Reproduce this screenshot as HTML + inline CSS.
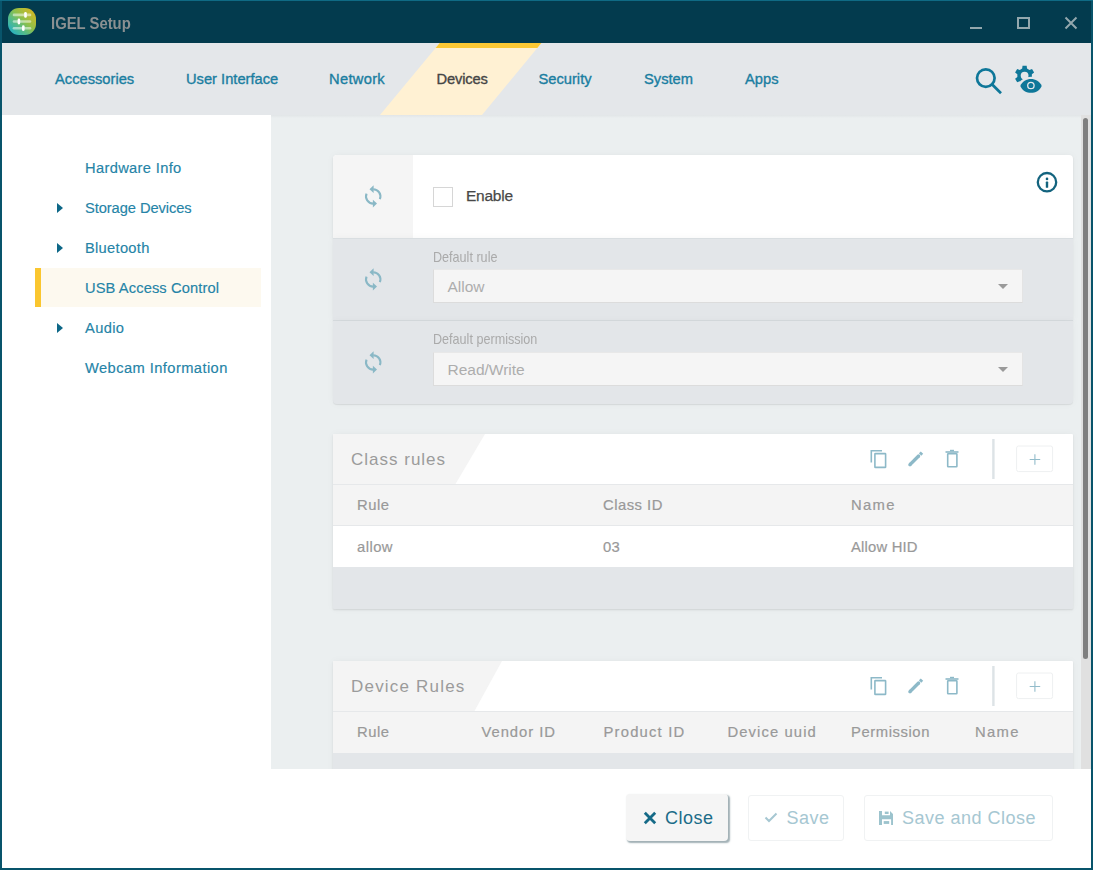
<!DOCTYPE html>
<html><head><meta charset="utf-8">
<style>
*{box-sizing:border-box;margin:0;padding:0}
html,body{width:1093px;height:870px;overflow:hidden;background:#fff;font-family:"Liberation Sans",sans-serif}
.a{position:absolute}
#win{position:absolute;left:0;top:0;width:1093px;height:870px;background:#08546b}
#title{left:2px;top:1px;width:1089px;height:42px;background:#033b4e}
#nav{left:2px;top:43px;width:1089px;height:72px;background:#e4e7ea}
#side{left:2px;top:115px;width:269px;height:654px;background:#fff}
#content{left:271px;top:115px;width:820px;height:654px;background:#ebeff0;overflow:hidden}
#footer{left:2px;top:769px;width:1089px;height:99px;background:#fff}
.tab{position:absolute;top:71px;font-size:14.7px;color:#1a7ea1;white-space:nowrap;line-height:16px;-webkit-text-stroke:0.35px #1a7ea1}
.si{position:absolute;left:85px;font-size:14.7px;color:#2584a7;white-space:nowrap;line-height:16px;-webkit-text-stroke:0.15px #2584a7}
.tri{position:absolute;left:57px;width:0;height:0;border-top:5px solid transparent;border-bottom:5px solid transparent;border-left:6px solid #0d6787}
.th{position:absolute;font-size:14.8px;color:#999;white-space:nowrap;line-height:16px;-webkit-text-stroke:0.2px #999}
.card{box-shadow:0 1px 2px rgba(0,0,0,0.10),0 0 8px rgba(0,0,0,0.035)}
.card2{box-shadow:0 1px 1px rgba(0,0,0,0.08),0 0 8px rgba(0,0,0,0.035)}
.lbl{font-size:15px;color:#aaa;white-space:nowrap;line-height:17px;transform:scaleX(0.84);transform-origin:0 0}
.sel{width:590px;height:34px;background:#f5f5f5;border:1px solid #dcdcdc;border-top-color:#e8e8e8;border-right-color:#e4e4e4}
.sel span{position:absolute;left:13.5px;top:8px;font-size:15.5px;color:#adadad;line-height:17px;white-space:nowrap}
.arrow{width:0;height:0;border-left:5px solid transparent;border-right:5px solid transparent;border-top:5px solid #9a9a9a}
.ttl{font-size:17px;letter-spacing:1px;color:#9b9b9b;white-space:nowrap;line-height:19px}
.btxt{font-size:18px;letter-spacing:0.5px;white-space:nowrap;line-height:20px}
</style></head><body>
<div id="win">
  <div class="a" style="left:0;top:0;width:1093px;height:1px;background:#0f6a84"></div>
  <div id="title" class="a">
  </div>
  <!-- app icon -->
  <div class="a" style="left:8px;top:8px;width:28px;height:27px;border-radius:11px;background:linear-gradient(45deg,#16acd8 0%,#55bb88 35%,#8cc04c 55%,#e6b418 100%)"></div>
  <svg class="a" style="left:8px;top:8px" width="28" height="27" viewBox="0 0 28 27">
    <g stroke="rgba(255,255,255,0.5)" stroke-width="2.6" stroke-linecap="round">
      <line x1="6" y1="6.9" x2="22" y2="6.9"/><line x1="6" y1="13.5" x2="22" y2="13.5"/><line x1="6" y1="20.2" x2="22" y2="20.2"/>
    </g>
    <g fill="#fff"><rect x="16.2" y="4" width="2.6" height="5.8" rx="1.3"/><rect x="9.6" y="10.6" width="2.6" height="5.8" rx="1.3"/><rect x="14" y="17.3" width="2.6" height="5.8" rx="1.3"/></g>
  </svg>
  <div class="a" style="left:51px;top:13.5px;font-weight:bold;font-size:16.5px;color:#8b9091;line-height:19px;white-space:nowrap;transform:scaleX(0.9);transform-origin:0 0">IGEL Setup</div>
  <!-- window controls -->
  <div class="a" style="left:970px;top:26.5px;width:12px;height:2px;background:#93a7ad"></div>
  <div class="a" style="left:1017px;top:16.5px;width:13px;height:12.5px;border:2px solid #93a7ad"></div>
  <svg class="a" style="left:1064px;top:16px" width="14" height="14" viewBox="0 0 14 14"><path d="M1.5 1.5L12.5 12.5M12.5 1.5L1.5 12.5" stroke="#93a7ad" stroke-width="2"/></svg>

  <div id="nav" class="a"></div>
  <svg class="a" style="left:0;top:43px" width="600" height="72" viewBox="0 0 600 72">
    <polygon points="439.7,0 541.4,0 482,72 380,72" fill="#fff1d3"/>
    <polygon points="439.7,0 541.4,0 537.3,5 435.6,5" fill="#fcc834"/>
  </svg>
  <div class="tab" style="left:55px">Accessories</div>
  <div class="tab" style="left:186px">User Interface</div>
  <div class="tab" style="left:329px;letter-spacing:0.3px">Network</div>
  <div class="tab" style="left:436.5px;letter-spacing:-0.15px;color:#454545;-webkit-text-stroke:0.35px #454545">Devices</div>
  <div class="tab" style="left:538.5px">Security</div>
  <div class="tab" style="left:644px">System</div>
  <div class="tab" style="left:745px">Apps</div>
  <!-- search -->
  <svg class="a" style="left:970px;top:62px" width="36" height="36" viewBox="0 0 36 36">
    <circle cx="15.8" cy="16.1" r="8.8" fill="none" stroke="#0e7799" stroke-width="2.7"/>
    <path d="M22.2 22.5L31 31.3" stroke="#0e7799" stroke-width="2.7" stroke-linecap="butt"/>
  </svg>
  <!-- gear eye -->
  <svg class="a" style="left:1010px;top:62px" width="36" height="36" viewBox="0 0 36 36">
    <defs><mask id="gm"><rect x="0" y="0" width="36" height="36" fill="#fff"/><path d="M7.8 23.9 C11.8 11.8 30.2 11.8 34.2 23.9 C30.2 36 11.8 36 7.8 23.9Z" fill="#000"/></mask></defs>
    <path mask="url(#gm)" fill="#0e7799" fill-rule="evenodd" d="M12.19 6.60 L12.52 3.82 L16.68 3.82 L17.01 6.60 L19.45 8.02 L22.03 6.91 L24.11 10.51 L21.86 12.19 L21.86 15.01 L24.11 16.69 L22.03 20.29 L19.45 19.18 L17.01 20.60 L16.68 23.38 L12.52 23.38 L12.19 20.60 L9.75 19.18 L7.17 20.29 L5.09 16.69 L7.34 15.01 L7.34 12.19 L5.09 10.51 L7.17 6.91 L9.75 8.02Z M18.50 13.60 A3.9 3.9 0 1 0 10.70 13.60 A3.9 3.9 0 1 0 18.50 13.60Z"/>
    <path d="M10.3 23.9 C14 14.7 28 14.7 31.7 23.9 C28 33.1 14 33.1 10.3 23.9Z" fill="#0e7799"/>
    <circle cx="20.9" cy="23.5" r="3.2" fill="none" stroke="#e4e7ea" stroke-width="1.3"/>
  </svg>

  <div id="side" class="a">
  </div>
  <div class="si" style="top:159.5px;letter-spacing:0.33px">Hardware Info</div>
  <div class="tri" style="top:203px"></div>
  <div class="si" style="top:199.5px;letter-spacing:-0.08px">Storage Devices</div>
  <div class="tri" style="top:243px"></div>
  <div class="si" style="top:239.5px;letter-spacing:0.28px">Bluetooth</div>
  <div class="a" style="left:35px;top:268px;width:226px;height:39px;background:#fdf9ef"></div>
  <div class="a" style="left:35px;top:268px;width:6px;height:39px;background:#fac62f"></div>
  <div class="si" style="top:279.5px;letter-spacing:0.1px">USB Access Control</div>
  <div class="tri" style="top:323px"></div>
  <div class="si" style="top:319.5px;letter-spacing:0.35px">Audio</div>
  <div class="si" style="top:359.5px;letter-spacing:0.42px">Webcam Information</div>

  <div id="content" class="a"></div>
  <div class="a" style="left:271px;top:115px;width:810px;height:3px;background:linear-gradient(#e1e5e7,#ebeff0)"></div>

  <!-- ENABLE CARD -->
  <div class="a card" style="left:333px;top:155px;width:740px;height:83px;background:#fff;border-radius:4px 4px 0 0"></div>
  <div class="a" style="left:333px;top:155px;width:80px;height:83px;background:#f5f5f5;border-radius:4px 0 0 0"></div>
  <svg class="a ref" style="left:363px;top:185px" width="20" height="23" viewBox="0 0 20 23"><g fill="none" stroke="#8ab8c6" stroke-width="2.1"><path d="M10.2 4.2 A7.2 7.2 0 0 1 16.87 14.1"/><path d="M3.53 8.7 A7.2 7.2 0 0 0 10.2 18.6"/></g><g fill="#8ab8c6"><polygon points="6.5,4.2 10.6,0.3 10.6,8.1"/><polygon points="14,18.6 9.9,14.7 9.9,22.5"/></g></svg>
  <div class="a" style="left:433px;top:186.5px;width:20px;height:20px;border:1px solid #d6d6d6;background:#fff"></div>
  <div class="a" style="left:466px;top:186.5px;font-size:15.5px;letter-spacing:-0.25px;color:#484848;line-height:17px;-webkit-text-stroke:0.25px #484848">Enable</div>
  <svg class="a" style="left:1036px;top:171px" width="22" height="22" viewBox="0 0 22 22">
    <circle cx="11" cy="11.2" r="9.2" fill="none" stroke="#13637e" stroke-width="2.3"/>
    <rect x="9.8" y="10.6" width="2.4" height="6.2" rx="0.6" fill="#13637e"/>
    <circle cx="11" cy="7.9" r="1.3" fill="#13637e"/>
  </svg>
  <!-- DEFAULT RULE -->
  <div class="a" style="left:333px;top:237.5px;width:740px;height:1.5px;background:#d9dee1;z-index:2"></div>
  <div class="a card2" style="left:333px;top:238px;width:740px;height:83px;background:#e3e6e9"></div>
  <svg class="a ref" style="left:363px;top:268px" width="20" height="23" viewBox="0 0 20 23"><g fill="none" stroke="#8ab8c6" stroke-width="2.1"><path d="M10.2 4.2 A7.2 7.2 0 0 1 16.87 14.1"/><path d="M3.53 8.7 A7.2 7.2 0 0 0 10.2 18.6"/></g><g fill="#8ab8c6"><polygon points="6.5,4.2 10.6,0.3 10.6,8.1"/><polygon points="14,18.6 9.9,14.7 9.9,22.5"/></g></svg>
  <div class="a lbl" style="left:433px;top:248px">Default rule</div>
  <div class="a sel" style="left:433px;top:269px"><span>Allow</span></div>
  <div class="a arrow" style="left:998px;top:284px"></div>
  <!-- DEFAULT PERMISSION -->
  <div class="a" style="left:333px;top:320px;width:740px;height:1px;background:#d6dbde"></div>
  <div class="a card2" style="left:333px;top:321px;width:740px;height:83px;background:#e3e6e9;border-radius:0 0 4px 4px"></div>
  <svg class="a ref" style="left:363px;top:351px" width="20" height="23" viewBox="0 0 20 23"><g fill="none" stroke="#8ab8c6" stroke-width="2.1"><path d="M10.2 4.2 A7.2 7.2 0 0 1 16.87 14.1"/><path d="M3.53 8.7 A7.2 7.2 0 0 0 10.2 18.6"/></g><g fill="#8ab8c6"><polygon points="6.5,4.2 10.6,0.3 10.6,8.1"/><polygon points="14,18.6 9.9,14.7 9.9,22.5"/></g></svg>
  <div class="a lbl" style="left:433px;top:330px">Default permission</div>
  <div class="a sel" style="left:433px;top:352px"><span>Read/Write</span></div>
  <div class="a arrow" style="left:998px;top:367px"></div>

  <!-- CLASS RULES -->
  <div class="a card" style="left:333px;top:434px;width:740px;height:175px;background:#e3e6e9;border-radius:1px"></div>
  <div class="a" style="left:333px;top:434px;width:740px;height:51px;background:#fff;border-bottom:1px solid #e6e8ea;border-radius:1px 1px 0 0"></div>
  <svg class="a" style="left:333px;top:434px" width="160" height="50" viewBox="0 0 160 50"><polygon points="0,0 152,0 122.5,50 0,50" fill="#f4f4f4"/></svg>
  <div class="a ttl" style="left:351px;top:450px">Class rules</div>
  <svg class="a" style="left:860px;top:439px" width="200" height="42" viewBox="0 0 200 42">
    <g fill="none" stroke="#8db9c8" stroke-width="1.6">
      <path d="M11.3 23.4 V11.8 H22"/>
      <rect x="14.9" y="14.6" width="10.7" height="13.8" rx="0.5"/>
      <rect x="87.7" y="14.8" width="9.2" height="13" rx="0.5"/>
    </g>
    <path d="M50 25.6 L58.6 17" stroke="#8db9c8" stroke-width="3.4" stroke-linecap="round"/><path d="M48.6 27 L49.3 23.6 L52 26.3Z" fill="#8db9c8"/>
    <path d="M60.1 15.5 L62 13.6" stroke="#8db9c8" stroke-width="3.4"/>
    <rect x="85.5" y="12.2" width="13" height="1.6" fill="#8db9c8"/>
    <rect x="90" y="10.8" width="4" height="1.4" fill="#8db9c8"/>
    <rect x="132.2" y="0" width="2.4" height="40" fill="#dde3e6"/>
    <rect x="156.6" y="7" width="36" height="25.6" rx="2" fill="#fff" stroke="#eef0f1" stroke-width="1"/>
    <path d="M169.7 20.5 H180.2 M174.9 15.2 V25.8" stroke="#93bccb" stroke-width="1.1"/>
  </svg>
  <div class="a" style="left:333px;top:485px;width:740px;height:41px;background:#f4f4f4;border-bottom:1px solid #e6e8ea"></div>
  <div class="th" style="left:357px;top:497px;letter-spacing:0.55px">Rule</div>
  <div class="th" style="left:603px;top:497px;letter-spacing:0.5px">Class ID</div>
  <div class="th" style="left:851px;top:497px;letter-spacing:1.35px">Name</div>
  <div class="a" style="left:333px;top:526px;width:740px;height:41px;background:#fff"></div>
  <div class="th" style="left:357px;top:539px;letter-spacing:0.45px">allow</div>
  <div class="th" style="left:603px;top:539px;letter-spacing:0.2px">03</div>
  <div class="th" style="left:851px;top:539px;letter-spacing:0.2px">Allow HID</div>

  <!-- DEVICE RULES -->
  <div class="a card" style="left:333px;top:661px;width:740px;height:120px;background:#e3e6e9;border-radius:1px"></div>
  <div class="a" style="left:333px;top:661px;width:740px;height:51px;background:#fff;border-bottom:1px solid #e6e8ea;border-radius:1px 1px 0 0"></div>
  <svg class="a" style="left:333px;top:661px" width="180" height="50" viewBox="0 0 180 50"><polygon points="0,0 169,0 141.5,50 0,50" fill="#f4f4f4"/></svg>
  <div class="a ttl" style="left:351px;top:677px;letter-spacing:1.2px">Device Rules</div>
  <svg class="a" style="left:860px;top:666px" width="200" height="42" viewBox="0 0 200 42">
    <g fill="none" stroke="#8db9c8" stroke-width="1.6">
      <path d="M11.3 23.4 V11.8 H22"/>
      <rect x="14.9" y="14.6" width="10.7" height="13.8" rx="0.5"/>
      <rect x="87.7" y="14.8" width="9.2" height="13" rx="0.5"/>
    </g>
    <path d="M50 25.6 L58.6 17" stroke="#8db9c8" stroke-width="3.4" stroke-linecap="round"/><path d="M48.6 27 L49.3 23.6 L52 26.3Z" fill="#8db9c8"/>
    <path d="M60.1 15.5 L62 13.6" stroke="#8db9c8" stroke-width="3.4"/>
    <rect x="85.5" y="12.2" width="13" height="1.6" fill="#8db9c8"/>
    <rect x="90" y="10.8" width="4" height="1.4" fill="#8db9c8"/>
    <rect x="132.2" y="0" width="2.4" height="40" fill="#dde3e6"/>
    <rect x="156.6" y="7" width="36" height="25.6" rx="2" fill="#fff" stroke="#eef0f1" stroke-width="1"/>
    <path d="M169.7 20.5 H180.2 M174.9 15.2 V25.8" stroke="#93bccb" stroke-width="1.1"/>
  </svg>
  <div class="a" style="left:333px;top:712px;width:740px;height:41px;background:#f4f4f4"></div>
  <div class="th" style="left:357px;top:724px;letter-spacing:0.55px">Rule</div>
  <div class="th" style="left:481.5px;top:724px;letter-spacing:0.95px">Vendor ID</div>
  <div class="th" style="left:603.5px;top:724px;letter-spacing:1.2px">Product ID</div>
  <div class="th" style="left:727.5px;top:724px;letter-spacing:1.1px">Device uuid</div>
  <div class="th" style="left:851px;top:724px;letter-spacing:0.58px">Permission</div>
  <div class="th" style="left:975px;top:724px;letter-spacing:1.35px">Name</div>

  <!-- SCROLLBAR -->
  <div class="a" style="left:1081px;top:115px;width:10px;height:654px;background:#e0e0e0"></div>
  <div class="a" style="left:1083px;top:118px;width:5px;height:541px;background:#7f7f7f;border-radius:3px"></div>

  <div id="footer" class="a"></div>
  <!-- BUTTONS -->
  <div class="a" style="left:626px;top:794px;width:102px;height:47px;background:#f5f5f5;border-radius:4px;box-shadow:1.5px 1.5px 1.5px rgba(70,100,110,0.5)"></div>
  <svg class="a" style="left:642.5px;top:810.5px" width="14" height="14" viewBox="0 0 14 14"><path d="M1.8 1.8L12.2 12.2M12.2 1.8L1.8 12.2" stroke="#156a87" stroke-width="2.8"/></svg>
  <div class="a btxt" style="left:665px;top:808px;color:#1b6c88">Close</div>
  <div class="a" style="left:748px;top:794.5px;width:96px;height:46px;background:#fff;border:1px solid #f0f2f3;border-radius:3px"></div>
  <svg class="a" style="left:764px;top:811px" width="14" height="13" viewBox="0 0 14 13"><path d="M1.5 6.5L5 10L12.5 2.5" fill="none" stroke="#a6c7d2" stroke-width="2"/></svg>
  <div class="a btxt" style="left:786.5px;top:808px;color:#a6c7d2">Save</div>
  <div class="a" style="left:864px;top:794.5px;width:189px;height:46px;background:#fff;border:1px solid #f0f2f3;border-radius:3px"></div>
  <svg class="a" style="left:879px;top:810.5px" width="15" height="14" viewBox="0 0 15 14"><path d="M0 0H3V4.3H11V0L14 3V14H12.1V8.2H3V14H0Z" fill="#9cc3cd"/><rect x="5.8" y="0.6" width="3.8" height="2.4" fill="#9cc3cd"/><rect x="4.7" y="10.1" width="5.5" height="2.8" fill="#9cc3cd"/></svg>
  <div class="a btxt" style="left:902px;top:808px;color:#a6c7d2">Save and Close</div>
</div>
</body></html>
